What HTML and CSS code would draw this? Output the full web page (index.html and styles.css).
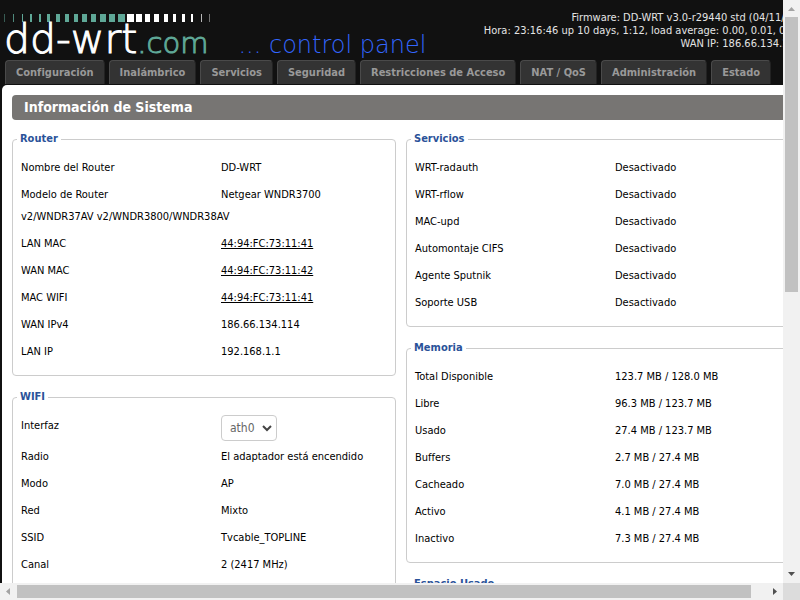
FILE: index.html
```html
<!DOCTYPE html>
<html lang="es">
<head>
<meta charset="utf-8">
<title>DD-WRT - Información de Sistema</title>
<link rel="stylesheet" href="styles.css">
</head>
<body>
<div class="viewport">
  <div class="page">
    <header class="header">
      <div class="brand">
        <svg class="bars" viewBox="0 0 208 8" width="208" height="8" aria-hidden="true">
          <g fill="#5fa897">
            <rect x="0" width="1" height="8" opacity=".5"/><rect x="9" width="1" height="8" opacity=".8"/><rect x="18" width="1" height="8"/><rect x="26" width="2" height="8"/><rect x="35" width="2" height="8"/><rect x="43" width="3" height="8"/><rect x="52" width="4" height="8"/><rect x="61" width="4" height="8"/><rect x="70" width="4" height="8"/><rect x="78" width="5" height="8"/><rect x="87" width="5" height="8"/><rect x="96" width="6" height="8"/><rect x="105" width="6" height="8"/><rect x="114" width="7" height="8"/>
          </g>
          <g fill="#fff">
            <rect x="123" width="7" height="8"/><rect x="132" width="6" height="8"/><rect x="141" width="5" height="8"/><rect x="150" width="5" height="8"/><rect x="160" width="4" height="8"/><rect x="169" width="3" height="8"/><rect x="178" width="3" height="8"/><rect x="187" width="2" height="8"/><rect x="197" width="1" height="8" opacity=".7"/><rect x="205" width="1" height="8" opacity=".4"/>
          </g>
        </svg>
        <div class="wordmark"><span class="name">dd-wrt</span><span class="com">.com</span><span class="panel">... control panel</span></div>
      </div>
      <div class="info">
        <div>Firmware: DD-WRT v3.0-r29440 std (04/11/16)</div>
        <div>Hora: 23:16:46 up 10 days, 1:12, load average: 0.00, 0.01, 0.04</div>
        <div>WAN IP: 186.66.134.114</div>
      </div>
    </header>
    <nav class="tabs">
      <a href="#">Configuración</a><a href="#">Inalámbrico</a><a href="#">Servicios</a><a href="#">Seguridad</a><a href="#">Restricciones de Acceso</a><a href="#">NAT / QoS</a><a href="#">Administración</a><a href="#">Estado</a>
    </nav>
    <main class="main">
      <h1>Información de Sistema</h1>
      <div class="columns">
        <div class="column">
          <fieldset>
            <legend>Router</legend>
            <dl>
              <div class="row"><dt>Nombre del Router</dt><dd>DD-WRT</dd></div>
              <div class="row"><dt>Modelo de Router</dt><dd>Netgear WNDR3700 v2/WNDR37AV v2/WNDR3800/WNDR38AV</dd></div>
              <div class="row"><dt>LAN MAC</dt><dd><a href="#">44:94:FC:73:11:41</a></dd></div>
              <div class="row"><dt>WAN MAC</dt><dd><a href="#">44:94:FC:73:11:42</a></dd></div>
              <div class="row"><dt>MAC WIFI</dt><dd><a href="#">44:94:FC:73:11:41</a></dd></div>
              <div class="row"><dt>WAN IPv4</dt><dd>186.66.134.114</dd></div>
              <div class="row"><dt>LAN IP</dt><dd>192.168.1.1</dd></div>
            </dl>
          </fieldset>
          <fieldset>
            <legend>WIFI</legend>
            <div class="row"><label class="key" for="iface">Interfaz</label><span class="select"><select id="iface"><option>ath0</option></select><svg viewBox="0 0 10 7" width="10" height="7" aria-hidden="true"><path d="M1 1l4 4 4-4" fill="none" stroke="#444" stroke-width="2"/></svg></span></div>
            <dl>
              <div class="row"><dt>Radio</dt><dd>El adaptador está encendido</dd></div>
              <div class="row"><dt>Modo</dt><dd>AP</dd></div>
              <div class="row"><dt>Red</dt><dd>Mixto</dd></div>
              <div class="row"><dt>SSID</dt><dd>Tvcable_TOPLINE</dd></div>
              <div class="row"><dt>Canal</dt><dd>2 (2417 MHz)</dd></div>
            </dl>
          </fieldset>
        </div>
        <div class="column">
          <fieldset>
            <legend>Servicios</legend>
            <dl>
              <div class="row"><dt>WRT-radauth</dt><dd>Desactivado</dd></div>
              <div class="row"><dt>WRT-rflow</dt><dd>Desactivado</dd></div>
              <div class="row"><dt>MAC-upd</dt><dd>Desactivado</dd></div>
              <div class="row"><dt>Automontaje CIFS</dt><dd>Desactivado</dd></div>
              <div class="row"><dt>Agente Sputnik</dt><dd>Desactivado</dd></div>
              <div class="row"><dt>Soporte USB</dt><dd>Desactivado</dd></div>
            </dl>
          </fieldset>
          <fieldset>
            <legend>Memoria</legend>
            <dl>
              <div class="row"><dt>Total Disponible</dt><dd>123.7 MB / 128.0 MB</dd></div>
              <div class="row"><dt>Libre</dt><dd>96.3 MB / 123.7 MB</dd></div>
              <div class="row"><dt>Usado</dt><dd>27.4 MB / 123.7 MB</dd></div>
              <div class="row"><dt>Buffers</dt><dd>2.7 MB / 27.4 MB</dd></div>
              <div class="row"><dt>Cacheado</dt><dd>7.0 MB / 27.4 MB</dd></div>
              <div class="row"><dt>Activo</dt><dd>4.1 MB / 27.4 MB</dd></div>
              <div class="row"><dt>Inactivo</dt><dd>7.3 MB / 27.4 MB</dd></div>
            </dl>
          </fieldset>
          <fieldset>
            <legend>Espacio Usado</legend>
          </fieldset>
        </div>
      </div>
    </main>
  </div>
</div>
<div class="bar bar-v" aria-hidden="true">
  <svg viewBox="0 0 17 17" width="17" height="17"><path d="M5 11h7L8.500 7z" fill="#a3a3a3"/></svg>
  <div class="track"><div class="thumb"></div></div>
  <svg viewBox="0 0 17 17" width="17" height="17"><path d="M5 6h7L8.500 10z" fill="#505050"/></svg>
</div>
<div class="bar bar-h" aria-hidden="true">
  <svg viewBox="0 0 17 17" width="17" height="17"><path d="M10 5v7L6 8.500z" fill="#a3a3a3"/></svg>
  <div class="track"><div class="thumb"></div></div>
  <svg viewBox="0 0 17 17" width="17" height="17"><path d="M7 5v7l4-3.500z" fill="#505050"/></svg>
</div>
<div class="corner"></div>
</body>
</html>
```
FILE: styles.css
```css
* { box-sizing: border-box; }

body {
  margin: 0;
  height: 100vh;
  display: grid;
  grid-template: minmax(0, 1fr) 17px / minmax(0, 1fr) 17px;
  overflow: hidden;
  background: #111;
  color: #000;
  font: 11px/22px "DejaVu Sans Condensed", Tahoma, sans-serif;
}

.viewport { overflow: hidden; }

.page {
  width: calc(100% + 18px);
  min-width: 801px;
  padding-left: 2px;
  background: #111;
}

.header {
  display: flex;
  justify-content: space-between;
  height: 60px;
  color: #e4e4e4;
}

.brand { padding: 14px 0 0 2px; white-space: nowrap; }
.bars { display: block; }

.wordmark {
  display: flex;
  align-items: baseline;
  height: 38px;
  line-height: 34px;
  font-family: "DejaVu Sans Light", "DejaVu Sans", sans-serif;
  font-weight: 200;
}
.name { font-size: 41px; color: #fff; -webkit-text-stroke: 1px #fff; }
.com { font-size: 29px; color: #5fa897; -webkit-text-stroke: 1px #5fa897; }
.panel { margin-left: 30px; font-size: 24px; color: #3366ff; }

.info {
  padding-top: 11px;
  line-height: 13px;
  text-align: right;
  white-space: nowrap;
}

.tabs {
  display: flex;
  gap: 4px;
  height: 25px;
  padding-left: 3px;
}
.tabs a {
  height: 24px;
  padding: 0 10px;
  border: 1px solid #4a4a4a;
  border-right-color: #222;
  border-bottom: 0;
  border-radius: 4px 4px 0 0;
  background: #333;
  color: #999;
  font-weight: bold;
  line-height: 24px;
  text-decoration: none;
  white-space: nowrap;
}

.main {
  min-height: 100vh;
  padding: 10px 11px 10px 10px;
  border-radius: 5px 0 0 0;
  background: #fff;
}

h1 {
  margin: 0 0 12px;
  padding: 0 12px;
  border-radius: 4px;
  background: #777573;
  color: #fff;
  font: bold 14px/25px "DejaVu Sans Condensed", Tahoma, sans-serif;
}

.columns {
  display: grid;
  grid-template-columns: 1fr 1fr;
  gap: 10px;
}

fieldset {
  min-width: 0;
  margin: 0 0 14px;
  padding: 11px 8px 7px;
  border: 1px solid #ccc;
  border-radius: 4px;
}
legend {
  margin-left: -4px;
  padding: 0 3px;
  color: #2a5299;
  font-weight: bold;
  line-height: 14px;
}
dl, dd { margin: 0; }
.row { margin-bottom: 5px; }
.row::after { content: ""; display: block; clear: both; }
dt, .key { float: left; width: 200px; }
dd { display: inline; }
dd a { color: #000; }

.select { position: relative; display: inline-block; height: 26px; vertical-align: top; }
select {
  appearance: none;
  display: block;
  height: 26px;
  padding: 0 21px 0 8px;
  border: 1px solid #ccc;
  border-radius: 4px;
  background: #fff;
  color: #666;
  font: 12px "DejaVu Sans Condensed", Tahoma, sans-serif;
}
.select svg { position: absolute; right: 5px; top: 10px; pointer-events: none; }

.bar { display: flex; background: #f1f1f1; }
.bar-v { flex-direction: column; }
.bar svg { flex: none; }
.track { flex: 1; }
.thumb { background: #c1c1c1; }
.bar-v .thumb { height: 50%; margin: 0 2px; }
.bar-h .track { padding: 2px 0; }
.bar-h .thumb { width: 98%; height: 13px; }
.corner { background: #dcdcdc; }
```
